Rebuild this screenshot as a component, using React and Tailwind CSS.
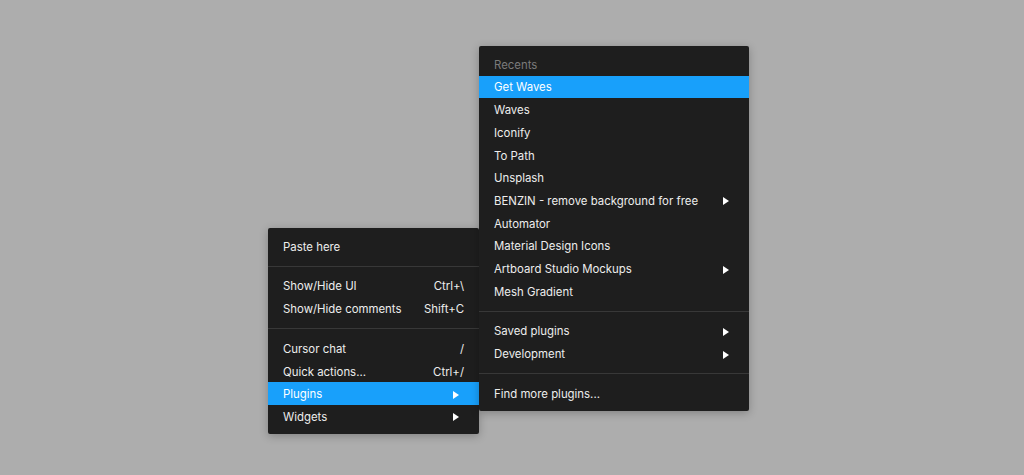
import React from 'react';

const Arrow = () => (
  <svg width="6" height="8" viewBox="0 0 6 8" className="mr-[5px]">
    <path d="M0 0 L6 4 L0 8 Z" fill="#ffffff" />
  </svg>
);

const Item = ({ label, shortcut, submenu, active }) => (
  <div
    className={`flex items-center justify-between h-[22.7px] pl-[15px] pr-[15px] pt-[2px] ${
      active ? 'bg-[#18a0fb] text-white' : 'text-[#ededed]'
    }`}
  >
    <span>{label}</span>
    {shortcut && <span>{shortcut}</span>}
    {submenu && <Arrow />}
  </div>
);

const Divider = () => (
  <div className="py-[8px]">
    <div className="h-px bg-[#383838]" />
  </div>
);

const recents = [
  { label: 'Get Waves', active: true },
  { label: 'Waves' },
  { label: 'Iconify' },
  { label: 'To Path' },
  { label: 'Unsplash' },
  { label: 'BENZIN - remove background for free', submenu: true },
  { label: 'Automator' },
  { label: 'Material Design Icons' },
  { label: 'Artboard Studio Mockups', submenu: true },
  { label: 'Mesh Gradient' },
];

export default function App() {
  return (
    <div
      className="h-[475px] bg-[#adadad] flex items-start pl-[268px] pt-[46px] text-[11.4px]"
      style={{ fontFamily: 'Inter, "Noto Sans", sans-serif' }}
    >
      {/* context menu */}
      <div className="w-[211px] mt-[182px] bg-[#1e1e1e] rounded-[2px] pt-[7px] pb-[6px] shadow-[0_2px_8px_rgba(0,0,0,0.25)] z-10">
        <Item label="Paste here" />
        <Divider />
        <Item label="Show/Hide UI" shortcut="Ctrl+\" />
        <Item label="Show/Hide comments" shortcut="Shift+C" />
        <Divider />
        <Item label="Cursor chat" shortcut="/" />
        <Item label="Quick actions..." shortcut="Ctrl+/" />
        <Item label="Plugins" submenu active />
        <Item label="Widgets" submenu />
      </div>

      {/* plugins submenu */}
      <div className="w-[270px] bg-[#1e1e1e] rounded-[2px] pt-[7px] pb-[6px] shadow-[0_2px_8px_rgba(0,0,0,0.25)] z-20">
        <div className="h-[22.7px] flex items-center pl-[15px] pt-[3px] text-[#7b7b7b]">Recents</div>
        {recents.map((r) => (
          <Item key={r.label} {...r} />
        ))}
        <Divider />
        <Item label="Saved plugins" submenu />
        <Item label="Development" submenu />
        <Divider />
        <Item label="Find more plugins..." />
      </div>
    </div>
  );
}
